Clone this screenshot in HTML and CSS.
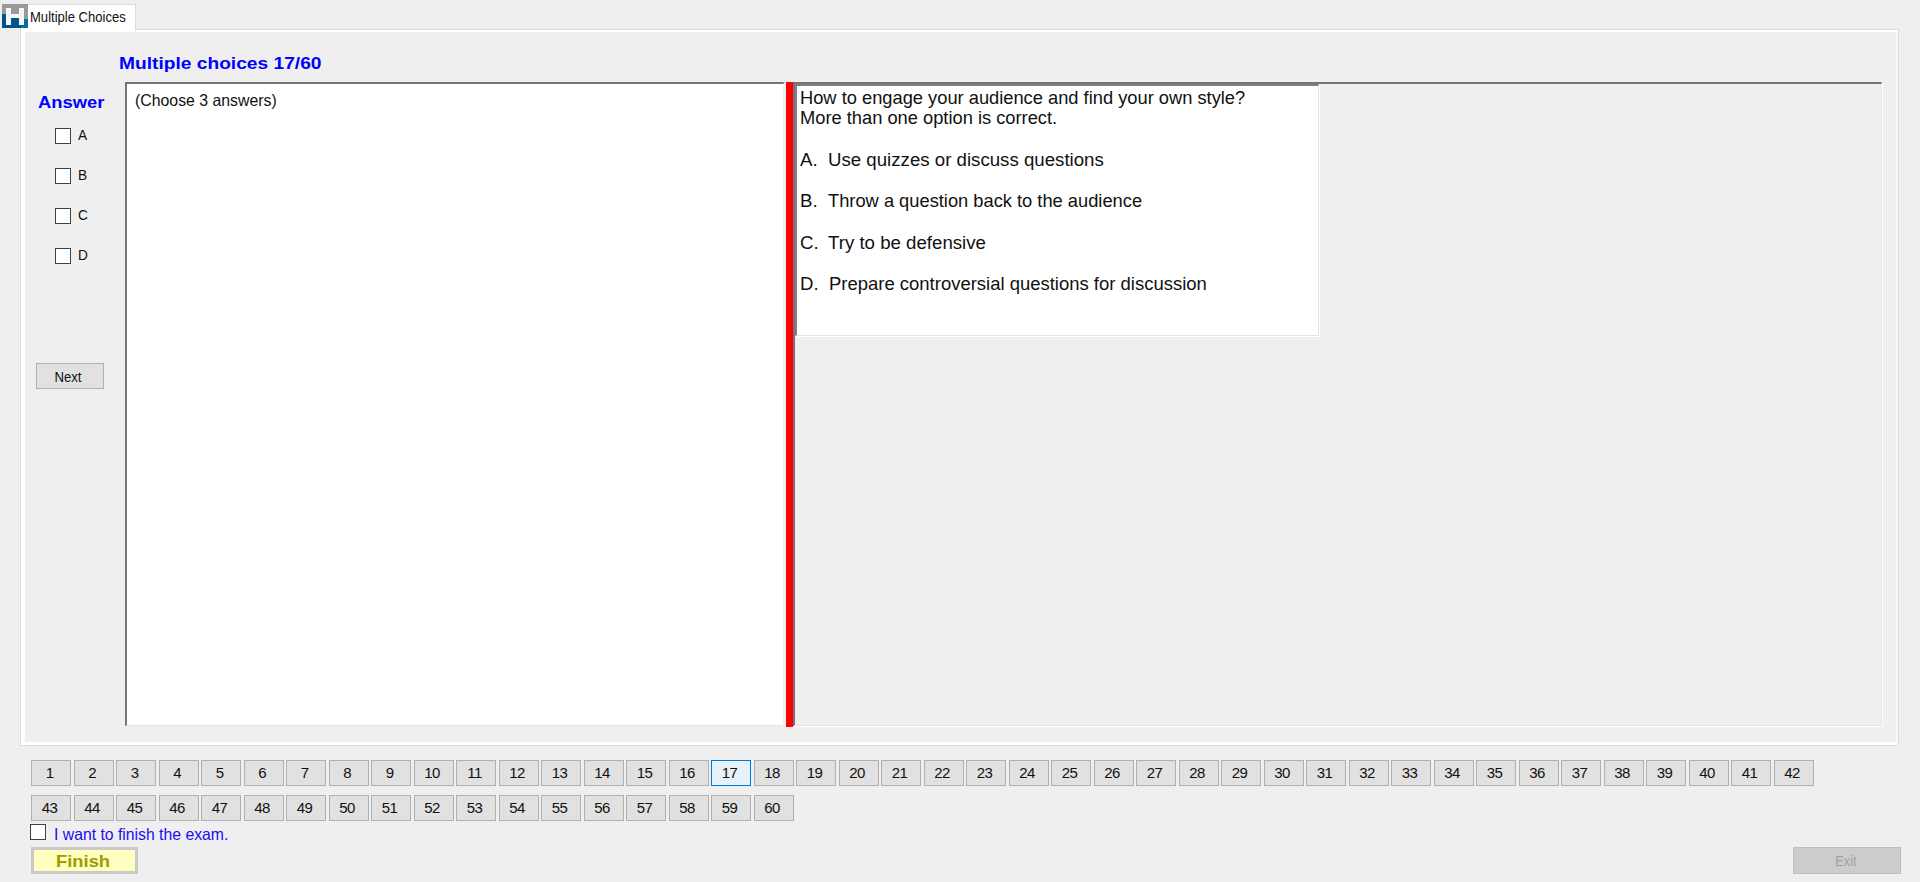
FILE: index.html
```html
<!DOCTYPE html>
<html lang="en">
<head>
<meta charset="utf-8">
<title>Multiple Choices</title>
<link rel="stylesheet" href="styles.css">
</head>
<body>
<div class="window">
  <header class="tabs">
    <svg class="logo" width="26" height="24" viewBox="0 0 26 24">
      <path fill="#999" d="M0 0h26v15H0z"/>
      <path fill="#005487" d="M0 10h26v14H0z"/>
      <path fill="#006baf" d="M20 14h6v10h-7z"/>
      <path fill="#999" d="M0 0h26v15h-4V9H0z"/>
      <path fill="#f4f6f8" d="M4 4h5v6h8V4h5v17h-5v-7H9v7H4z"/>
    </svg>
    <div class="tab"><span class="t tab-label">Multiple Choices</span></div>
  </header>
  <main class="panel">
    <h1 class="heading"><span class="t">Multiple choices 17/60</span></h1>
    <div class="work">
      <aside class="side">
        <h2 class="answer"><span class="t">Answer</span></h2>
        <div class="options">
          <label class="option"><i class="box"></i><span class="t">A</span></label>
          <label class="option"><i class="box"></i><span class="t">B</span></label>
          <label class="option"><i class="box"></i><span class="t">C</span></label>
          <label class="option"><i class="box"></i><span class="t">D</span></label>
        </div>
        <button class="btn next"><span class="t">Next</span></button>
      </aside>
      <section class="notes"><span class="t">(Choose 3 answers)</span></section>
      <div class="splitter"></div>
      <section class="viewer">
        <div class="question">
          <p><span class="t q1">How to engage your audience and find your own style?</span></p>
          <p><span class="t q2">More than one option is correct.</span></p>
          <p class="choice"><b>A.</b><span class="t q3">Use quizzes or discuss questions</span></p>
          <p class="choice"><b>B.</b><span class="t q4">Throw a question back to the audience</span></p>
          <p class="choice"><b>C.</b><span class="t q5">Try to be defensive</span></p>
          <p class="choice"><b>D.</b><span class="t q6">Prepare controversial questions for discussion</span></p>
        </div>
      </section>
    </div>
  </main>
  <nav class="numbers">
    <button class="btn">1</button><button class="btn">2</button><button class="btn">3</button><button class="btn">4</button><button class="btn">5</button><button class="btn">6</button><button class="btn">7</button><button class="btn">8</button><button class="btn">9</button><button class="btn">10</button>
    <button class="btn">11</button><button class="btn">12</button><button class="btn">13</button><button class="btn">14</button><button class="btn">15</button><button class="btn">16</button><button class="btn current">17</button><button class="btn">18</button><button class="btn">19</button><button class="btn">20</button>
    <button class="btn">21</button><button class="btn">22</button><button class="btn">23</button><button class="btn">24</button><button class="btn">25</button><button class="btn">26</button><button class="btn">27</button><button class="btn">28</button><button class="btn">29</button><button class="btn">30</button>
    <button class="btn">31</button><button class="btn">32</button><button class="btn">33</button><button class="btn">34</button><button class="btn">35</button><button class="btn">36</button><button class="btn">37</button><button class="btn">38</button><button class="btn">39</button><button class="btn">40</button>
    <button class="btn">41</button><button class="btn">42</button><button class="btn">43</button><button class="btn">44</button><button class="btn">45</button><button class="btn">46</button><button class="btn">47</button><button class="btn">48</button><button class="btn">49</button><button class="btn">50</button>
    <button class="btn">51</button><button class="btn">52</button><button class="btn">53</button><button class="btn">54</button><button class="btn">55</button><button class="btn">56</button><button class="btn">57</button><button class="btn">58</button><button class="btn">59</button><button class="btn">60</button>
  </nav>
  <label class="confirm"><i class="box"></i><span class="t">I want to finish the exam.</span></label>
  <footer class="footer">
    <button class="finish"><span class="t">Finish</span></button>
    <button class="exit" disabled><span class="t">Exit</span></button>
  </footer>
</div>
</body>
</html>
```
FILE: styles.css
```css
* { box-sizing: border-box; }
body {
  margin: 0;
  background: #efefef;
  color: #111;
  font: 15px/20px "Liberation Sans", Arial, sans-serif;
}
h1, h2, p { margin: 0; }
button {
  font: inherit;
  color: inherit;
  padding: 0;
  border-radius: 0;
}
.window {
  position: relative;
  width: 1920px;
  height: 882px;
  overflow: hidden;
}
.t {
  display: inline-block;
  white-space: nowrap;
  transform-origin: 0 50%;
}

/* tab strip */
.tabs {
  height: 29px;
  padding: 4px 0 0 20px;
}
.logo {
  position: absolute;
  left: 2px;
  top: 4px;
  z-index: 2;
}
.tab {
  position: relative;
  z-index: 1;
  width: 116px;
  height: 27px;
  padding: 2px 0 0 9px;
  background: #fff;
  border: 1px solid #dcdcdc;
  border-bottom: 0;
}
.tab-label { font-size: 15px; line-height: 20px; transform: scaleX(.87); margin-top: -1px; }

/* tab page */
.panel {
  width: 1879px;
  height: 717px;
  margin-left: 20px;
  border: 1px solid #dcdcdc;
  box-shadow: inset 4px 0 #fff, inset 0 2px #fff, inset 0 -3px #fff, inset -2px 0 #f8f8f8;
}
.heading {
  height: 52px;
  padding: 24px 0 0 98px;
  color: #0000ff;
  font-size: 17px;
  line-height: 20px;
}
.heading .t { transform: scaleX(1.128); }
.work {
  display: flex;
  height: 644px;
}
.side {
  width: 104px;
  padding: 11px 0 0 15px;
}
.answer {
  padding-left: 2px;
  color: #0000ff;
  font-size: 17px;
  line-height: 20px;
}
.answer .t { transform: scaleX(1.08); }
.options {
  display: flex;
  flex-direction: column;
  gap: 24px;
  padding: 15px 0 0 19px;
}
.option {
  display: flex;
  align-items: center;
  gap: 7px;
  height: 16px;
}
.option .t { transform: scaleX(.88); margin-top: -2px; font-size: 15.5px; }
.box {
  width: 16px;
  height: 16px;
  background: #fff;
  border: 1px solid #404040;
}
.btn {
  display: block;
  width: 40px;
  height: 26px;
  background: #e1e1e1;
  border: 1px solid #b0b0b0;
  line-height: 24px;
  text-align: center;
}
.next {
  width: 68px;
  margin-top: 99px;
}
.next .t { transform: scaleX(.85); transform-origin: 50% 50%; margin: 1px 0 0 -4px; font-size: 15.5px; }
.notes {
  width: 660px;
  padding: 6px 0 0 8px;
  background: #fff;
  border: 2px solid #747474;
  border-right-color: #eee;
  border-bottom: 1px solid #e4e4e4;
}
.notes .t { font-size: 16.5px; transform: scaleX(.96); }
.splitter {
  width: 7px;
  margin-left: 1px;
  height: 645px;
  background: #f00;
}
.viewer {
  width: 1089px;
  border: 2px solid #747474;
  border-right: 1px solid #e4e4e4;
  border-bottom: 1px solid #e4e4e4;
  box-shadow: 1px 1px #fff;
}
.question {
  width: 524px;
  height: 252px;
  padding: 2px 0 0 3px;
  background: #fff;
  border: 2px solid #808080;
  border-right: 1px solid #e4e4e4;
  border-bottom: 1px solid #e4e4e4;
  box-shadow: 1px 1px #fff;
  font-size: 18.67px;
  line-height: 20.7px;
}
.question p { height: 20.7px; }
.question .choice {
  display: flex;
  margin: 20.7px 0 0;
}
.choice b { width: 28px; font-weight: 400; }
.q1, .q4 { transform: scaleX(.98); }
.q2 { transform: translateY(-1px) scaleX(.98); }
.q6 { transform: translateX(1px) scaleX(.99); }

/* question navigation */
.numbers {
  display: flex;
  flex-wrap: wrap;
  gap: 9px 2.5px;
  width: 1790px;
  margin: 14px 0 0 31px;
}
.numbers .btn {
  padding: 0 3px 0 0;
  font-size: 15px;
  letter-spacing: -.6px;
}
.numbers .current {
  background: #e5f1fb;
  border-color: #0078d7;
}

.confirm {
  display: flex;
  align-items: flex-start;
  gap: 8px;
  height: 25px;
  margin: 3px 0 0 30px;
  color: #1c0cf0;
}
.confirm .t { font-size: 16.5px; line-height: 20px; transform: scaleX(.955); }
.footer {
  display: flex;
  justify-content: space-between;
  width: 1870px;
  margin: -2px 0 0 31px;
}
.finish {
  width: 107px;
  height: 27px;
  background: #ffffc0;
  border: 3px solid #c9c9c9;
  color: #a09a00;
  font-size: 17px;
  font-weight: 700;
  line-height: 21px;
}
.finish .t { transform-origin: 50% 50%; transform: scaleX(1.08); margin: 1px 0 0 -3px; }
.exit {
  width: 108px;
  height: 27px;
  background: #ccc;
  border: 1px solid #bfbfbf;
  color: #a2a2a2;
  line-height: 24px;
}
.exit .t { transform-origin: 50% 50%; transform: scaleX(.82); margin-left: -2px; font-size: 15.5px; }
```
